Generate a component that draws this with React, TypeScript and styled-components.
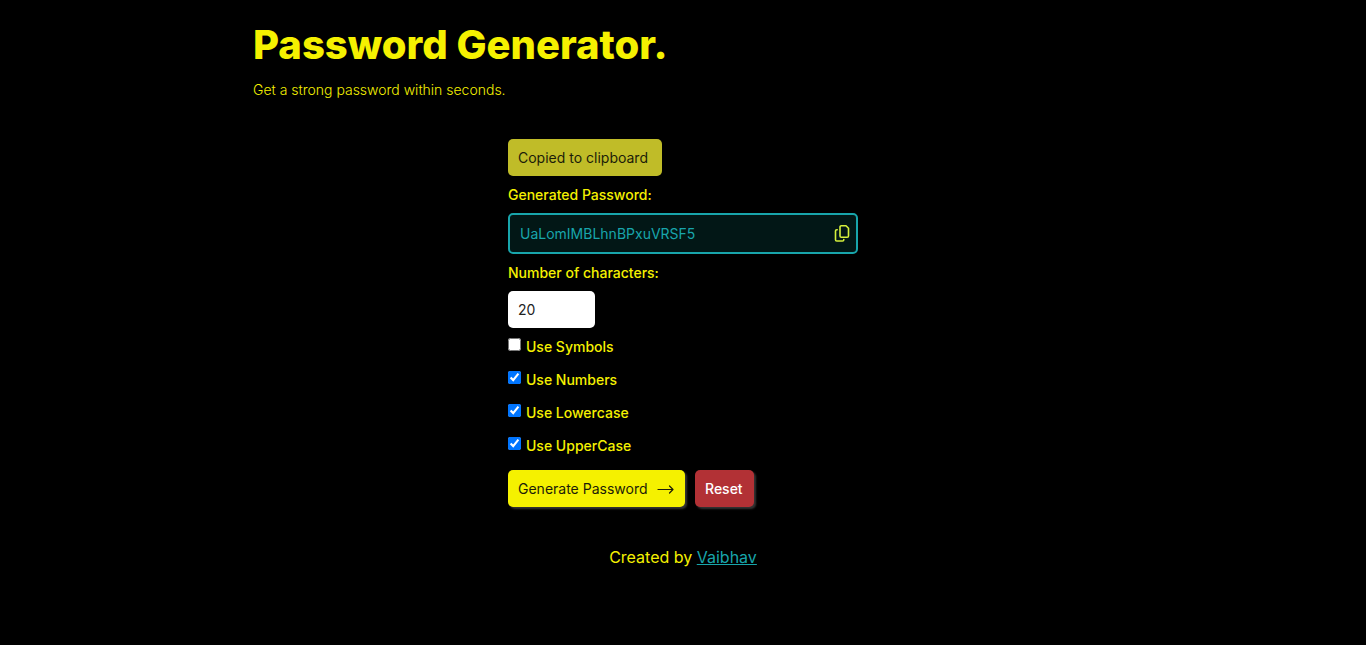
import React, { useState } from "react";
import styled, { createGlobalStyle } from "styled-components";

const GlobalStyle = createGlobalStyle`
  *, *::before, *::after { box-sizing: border-box; }
  body {
    margin: 0;
    background: #000;
    color: #f5f100;
    font-family: Inter, "Liberation Sans", sans-serif;
    font-size: 14px;
    line-height: 17px;
  }
`;

const Page = styled.div`
  max-width: 900px;
  margin: 0 auto;
  padding: 20px;
`;

const Title = styled.h1`
  margin: 0;
  font-size: 40px;
  font-weight: 800;
  line-height: 50px;
`;

const Tagline = styled.p`
  margin: 11px 0 41px;
  font-weight: 300;
`;

const Form = styled.form`
  display: flex;
  flex-direction: column;
  align-items: flex-start;
  gap: 10px;
  width: 100%;
  max-width: 350px;
  margin: 0 auto;
`;

const Notice = styled.div`
  min-width: 154px;
  padding: 10px;
  border-radius: 5px;
  background: #c0bc28;
  color: #1c1c08;
`;

const Label = styled.label`
  font-weight: 500;
`;

const PasswordBox = styled.div`
  display: flex;
  align-items: center;
  width: 100%;
  height: 41px;
  padding: 0 4px 0 10px;
  border: 2px solid #18a5ab;
  border-radius: 5px;
  background: #021716;
`;

const PasswordField = styled.input`
  flex: 1;
  min-width: 0;
  height: 17px;
  padding: 0;
  border: 0;
  outline: 0;
  background: transparent;
  color: #18a5ab;
  font: inherit;
`;

const CopyButton = styled.button`
  display: flex;
  padding: 0;
  border: 0;
  background: transparent;
  color: #d5f03c;
  cursor: pointer;
`;

const LengthField = styled.input`
  width: 87px;
  height: 37px;
  padding: 10px;
  border: 0;
  border-radius: 5px;
  background: #fff;
  color: #222;
  font: inherit;
`;

const Option = styled.div`
  display: flex;
  align-items: flex-start;
  gap: 5px;
  padding-bottom: 6px;
`;

const Checkbox = styled.input`
  width: 13px;
  height: 13px;
  margin: 0;
`;

const Actions = styled.div`
  display: flex;
  gap: 10px;
`;

const Button = styled.button<{ $danger?: boolean }>`
  display: flex;
  align-items: center;
  justify-content: space-between;
  gap: 8px;
  min-width: ${(p) => (p.$danger ? 59 : 177)}px;
  padding: 10px;
  border: 0;
  border-radius: 5px;
  background: ${(p) => (p.$danger ? "#b23135" : "#f5f100")};
  color: ${(p) => (p.$danger ? "#fff" : "#1c1c08")};
  box-shadow: 2px 2px 2px #333;
  font: inherit;
  font-weight: ${(p) => (p.$danger ? 500 : 400)};
  cursor: pointer;
`;

const Footer = styled.footer`
  margin-top: 40px;
  text-align: center;
  font-size: 16px;
  line-height: 20px;
`;

const FooterLink = styled.a`
  color: #18a5ab;
`;

const CopyIcon = () => (
  <svg width="20" height="20" viewBox="0 0 20 20" fill="none" stroke="currentColor" strokeWidth="1.6" strokeLinejoin="round" strokeLinecap="round" aria-hidden="true">
    <path d="M9.300 1.700h4.700l2.500 2.500v7.800a1.300 1.300 0 0 1-1.300 1.300H9.300a1.300 1.300 0 0 1-1.300-1.300V3A1.300 1.300 0 0 1 9.300 1.700z" />
    <path d="M5.200 5.700H4.800A1.300 1.300 0 0 0 3.500 7v8.700a1.300 1.300 0 0 0 1.300 1.300h5.700a1.300 1.300 0 0 0 1.300-1.300v-.2" />
  </svg>
);

const ArrowIcon = () => (
  <svg width="18" height="16" viewBox="0 0 18 16" fill="none" stroke="currentColor" strokeWidth="1.2" strokeLinejoin="round" strokeLinecap="round" aria-hidden="true">
    <path d="M1 8.500H16M12.500 5l3.500 3.500-3.500 3.500" />
  </svg>
);

const OPTIONS = [
  { id: "symbols", label: "Use Symbols", on: false },
  { id: "numbers", label: "Use Numbers", on: true },
  { id: "lowercase", label: "Use Lowercase", on: true },
  { id: "uppercase", label: "Use UpperCase", on: true },
];

export default function App() {
  const [length, setLength] = useState("20");
  return (
    <>
      <GlobalStyle />
      <Page>
        <header>
          <Title>Password Generator.</Title>
          <Tagline>Get a strong password within seconds.</Tagline>
        </header>
        <Form onSubmit={(e) => e.preventDefault()}>
          <Notice role="status">Copied to clipboard</Notice>
          <Label htmlFor="password">Generated Password:</Label>
          <PasswordBox>
            <PasswordField id="password" type="text" readOnly value="UaLomIMBLhnBPxuVRSF5" />
            <CopyButton type="button" aria-label="Copy password">
              <CopyIcon />
            </CopyButton>
          </PasswordBox>
          <Label htmlFor="length">Number of characters:</Label>
          <LengthField id="length" type="number" value={length} onChange={(e) => setLength(e.target.value)} />
          {OPTIONS.map((o) => (
            <Option key={o.id}>
              <Checkbox id={o.id} type="checkbox" defaultChecked={o.on} />
              <Label htmlFor={o.id}>{o.label}</Label>
            </Option>
          ))}
          <Actions>
            <Button type="submit">
              Generate Password <ArrowIcon />
            </Button>
            <Button type="reset" $danger>
              Reset
            </Button>
          </Actions>
        </Form>
        <Footer>
          Created by <FooterLink href="#">Vaibhav</FooterLink>
        </Footer>
      </Page>
    </>
  );
}
